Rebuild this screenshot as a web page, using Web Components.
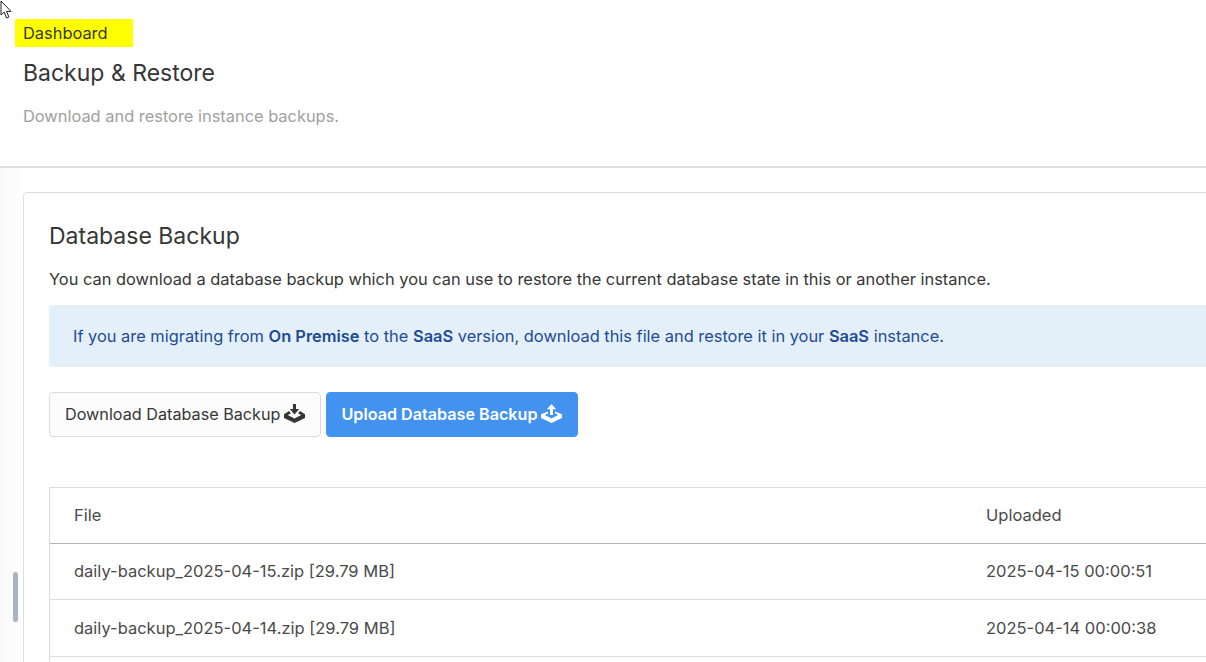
<!DOCTYPE html>
<html><head><meta charset="utf-8"><title>Backup & Restore</title>
<style>
html,body{margin:0;height:100%;overflow:hidden;background:#fff}
body{font-family:Inter,"Liberation Sans",sans-serif;color:#363636}
</style></head><body>
<backup-page></backup-page>
<script>
const def=(n,css,html)=>customElements.define(n,class extends HTMLElement{constructor(){super();this.attachShadow({mode:'open'}).innerHTML=`<style>${css}</style>${html}`}});
const down=`<svg width="21" height="19" viewBox="0 0 21 19" aria-hidden="true"><path fill="currentColor" d="M9 0h3v5h3.200l-4.700 5.500L5.800 5H9z"/><path fill="currentColor" d="M5 7 7 9.300 3.800 11 10.500 14.500 17.200 11 14 9.300 16 7l5 3.200V14l-10.500 5L0 14v-3.800z"/></svg>`;
const up=`<svg width="21" height="19" viewBox="0 0 21 19" aria-hidden="true"><path fill="currentColor" d="M10.500 0l4.700 5.200H12V11H9V5.200H5.800z"/><path fill="currentColor" d="M7 7.500V9.500L3.800 11 10.500 14.500 17.200 11 14 9.500V7.500l7 2.700V14l-10.500 5L0 14v-3.800z"/></svg>`;
def('cursor-mark',`:host{position:absolute;left:0;top:0;display:block;line-height:0;z-index:5}`,
`<svg width="13" height="20" viewBox="0 0 13 20"><path d="M1 1v14l3.200-3 2.300 6 2.400-1-2.300-5.600H11z" fill="#fff" stroke="#222" stroke-width="1"/></svg>`);
def('scroll-thumb',`:host{position:absolute;left:13px;top:572px;width:5px;height:50px;border-radius:3px;background:#a9b4c5;display:block}`,``);
def('page-header',`:host{display:block;background:#fff;border-bottom:2px solid #dedede;height:168px;box-sizing:border-box;position:relative}
.crumb{margin-left:15px;position:relative;top:19px;display:flex;align-items:center;width:118px;height:28px;padding-left:8px;box-sizing:border-box;background:#ff0;font-size:16.4px;color:#363636}
h1{font-weight:400;font-size:23px;line-height:30px;margin:0;padding:30px 0 0 23px;color:#363636}
p{margin:0;padding:18px 0 0 23px;font-size:16.4px;line-height:20px;color:#a0a0a0}`,
`<div class="crumb">Dashboard</div><h1>Backup &amp; Restore</h1><p>Download and restore instance backups.</p>`);
def('info-note',`:host{display:block;background:#e3f0fa;color:#1f4a94;font-size:16.4px;line-height:24px;padding:19px 24px;height:62px;box-sizing:border-box;border-radius:4px 0 0 4px}
b{font-weight:600}`,
`If you are migrating from <b>On Premise</b> to the <b>SaaS</b> version, download this file and restore it in your <b>SaaS</b> instance.`);
def('action-button',`:host{display:block}
.b{display:flex;align-items:center;gap:4px;height:45px;box-sizing:border-box;border:1px solid #dbdbdb;border-radius:4px;background:#fcfcfc;color:#363636;font-size:16.2px;padding:0 15px 2px 15px;white-space:nowrap}
:host([primary]) .b{background:#4292f0;border-color:#4292f0;color:#fff;font-weight:600;font-size:16.15px;gap:4px;padding-left:14px}`,
`<div class="b"><slot></slot><slot name="i"></slot></div>`);
def('backup-table',`:host{display:block;margin-top:50px;border:1px solid #dbdbdb;border-right:0;font-size:16.5px;color:#4a4a4a}
.r{display:grid;grid-template-columns:912px 1fr;height:56px;align-items:center;padding-left:24px;border-top:1px solid #dedede;white-space:nowrap}
.r.h{height:53px;padding-bottom:2px;border-top:0;border-bottom:1px solid #b5b5b5}
.r.h + .r{border-top:0;height:53px;padding-bottom:2px}`,
`<div class="r h"><span>File</span><span>Uploaded</span></div>
<div class="r"><span>daily-backup_2025-04-15.zip [29.79 MB]</span><span>2025-04-15 00:00:51</span></div>
<div class="r"><span>daily-backup_2025-04-14.zip [29.79 MB]</span><span>2025-04-14 00:00:38</span></div>
<div class="r"><span></span><span></span></div>`);
def('backup-card',`:host{display:block;margin:24px -200px 0 23px;background:#fff;border:1px solid #dedede;border-radius:4px;padding:25px;height:600px;box-sizing:border-box}
h2{font-weight:400;font-size:23px;line-height:36px;margin:0;color:#363636}
.d{font-size:16.4px;line-height:24px;margin:13px 0 14px;color:#363636}
.a{display:flex;gap:5px;margin-top:25px}
[slot=i]{display:flex;color:inherit}`,
`<h2>Database Backup</h2><div class="d">You can download a database backup which you can use to restore the current database state in this or another instance.</div>
<info-note></info-note>
<div class="a"><action-button>Download Database Backup<span slot="i">${down}</span></action-button><action-button primary>Upload Database Backup<span slot="i">${up}</span></action-button></div>
<backup-table></backup-table>`);
def('backup-page',`:host{display:block;position:relative;width:1206px;height:662px;overflow:hidden;background:linear-gradient(90deg,#f9f9f9,#fdfdfd 18px,#fff 24px)}`,
`<page-header></page-header><backup-card></backup-card><scroll-thumb></scroll-thumb><cursor-mark></cursor-mark>`);
</script>
</body></html>
